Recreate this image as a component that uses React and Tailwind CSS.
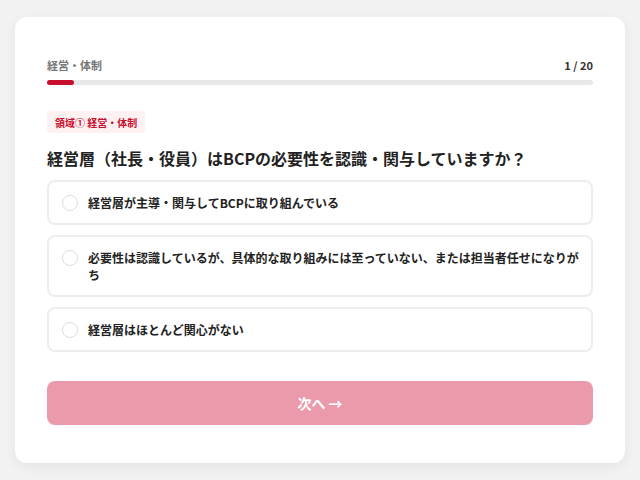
import React from "react";

const options = [
  "経営層が主導・関与してBCPに取り組んでいる",
  "必要性は認識しているが、具体的な取り組みには至っていない、または担当者任せになりがち",
  "経営層はほとんど関心がない",
];

export default function App() {
  return (
    <div
      className="min-h-[480px] bg-[#f2f2f2] px-[15px] pt-[17px] pb-[17px]"
      style={{ fontFamily: '"Noto Sans CJK JP", "Noto Sans", sans-serif' }}
    >
      <div className="rounded-[12px] bg-white px-8 pt-10 pb-[38px] shadow-[0_4px_14px_rgba(0,0,0,0.06)]">
        <div className="flex items-center justify-between text-[11px] leading-4 font-bold">
          <span className="text-[#777777]">経営・体制</span>
          <span className="text-[#333333]">1 / 20</span>
        </div>
        <div className="mt-[7px] h-[5px] w-full rounded-full bg-[#e8e8e8]">
          <div className="h-full w-[5%] rounded-full bg-[#c8102e]" />
        </div>
        <div className="mt-[26px] inline-flex h-[22px] items-center rounded-[4px] bg-[#fff0f2] px-2 text-[10px] font-bold text-[#c8102e]">
          領域① 経営・体制
        </div>
        <h2 className="mt-[13px] text-[16px] leading-6 font-bold text-[#222222]">
          経営層（社長・役員）はBCPの必要性を認識・関与していますか？
        </h2>
        <div className="mt-[10px] flex flex-col gap-[10px]">
          {options.map((o) => (
            <div
              key={o}
              className="flex items-start gap-[10px] rounded-[8px] border-2 border-[#ededed] bg-white py-[12px] pr-[10px] pl-[13px]"
            >
              <span className="mt-[0.5px] h-4 w-4 shrink-0 rounded-full border-[1.5px] border-[#dddddd] bg-white" />
              <span className="text-[12px] leading-[17px] font-bold text-[#222222]">{o}</span>
            </div>
          ))}
        </div>
        <button className="mt-[29px] flex h-[44px] w-full items-center justify-center rounded-[8px] bg-[#ea9aab] text-[14px] font-bold text-white">
          次へ →
        </button>
      </div>
    </div>
  );
}
